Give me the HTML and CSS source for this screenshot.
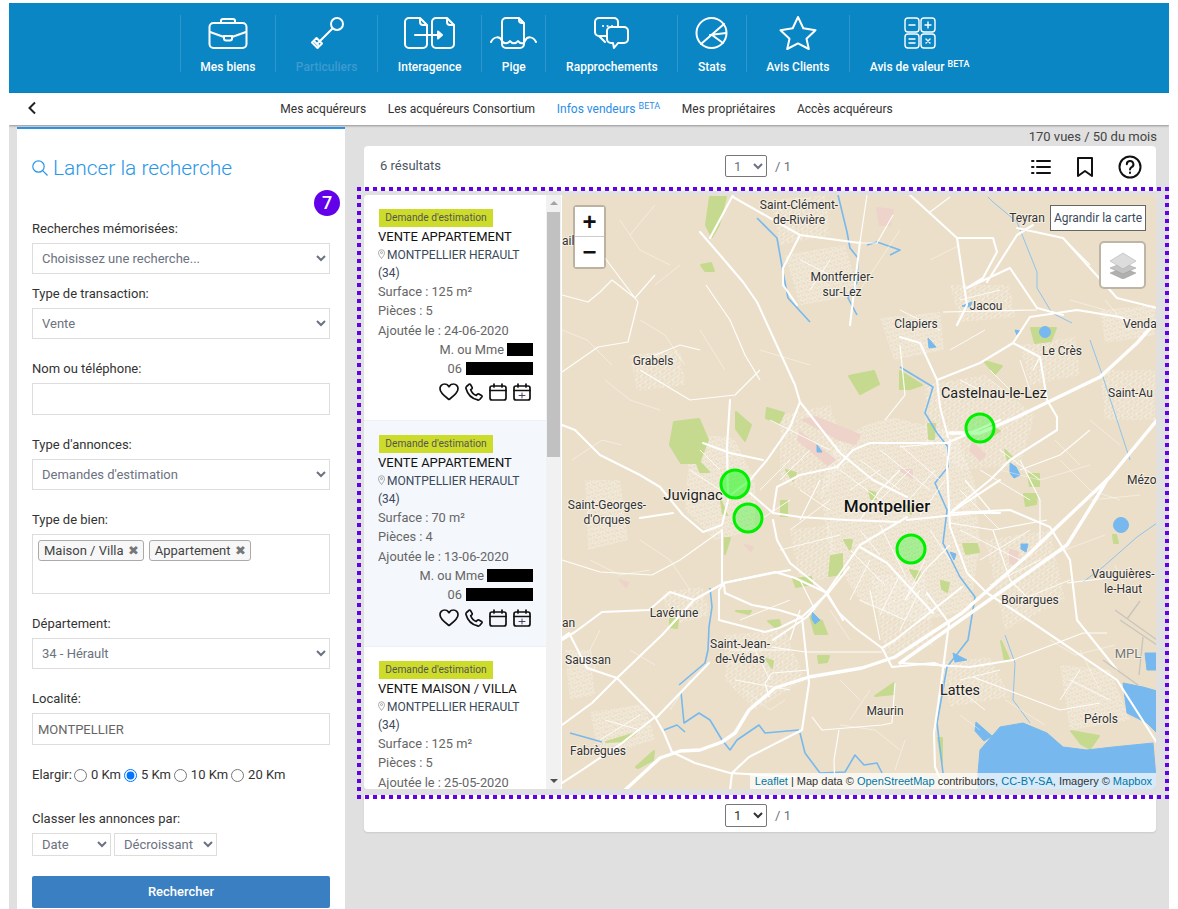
FILE: index.html
```html
<!DOCTYPE html>
<html lang="fr">
<head>
<meta charset="utf-8">
<title>Infos vendeurs</title>
<link rel="stylesheet" href="styles.css">
</head>
<body>
<div class="page">
  <header class="topbar">
    <a class="tab">
      <svg class="tab-icon" width="48" height="36" viewBox="0 0 48 36"><rect x="5.500" y="8" width="37" height="25" rx="4"/><path d="M17 8V6a2 2 0 0 1 2-2h10a2 2 0 0 1 2 2v2M6 17l14 5M42 17l-14 5M20 21h8v2.500a2 2 0 0 1-2 2h-4a2 2 0 0 1-2-2z"/></svg>
      <span class="tab-label">Mes biens</span>
    </a>
    <a class="tab tab-off">
      <svg class="tab-icon" width="48" height="36" viewBox="0 0 48 36"><circle cx="34" cy="9" r="6"/><path d="M29.500 13.500L15 28M9 27.500l4.500-4.500 5.500 5.500-4.500 4.500zM12 27l3 3"/></svg>
      <span class="tab-label">Particuliers</span>
    </a>
    <a class="tab">
      <svg class="tab-icon" width="56" height="36" viewBox="0 0 56 36"><path d="M18 3H7a4 4 0 0 0-4 4v22a4 4 0 0 0 4 4h14a4 4 0 0 0 4-4V10zM18 3v4a3 3 0 0 0 3 3h4M45 3H34a4 4 0 0 0-4 4v22a4 4 0 0 0 4 4h14a4 4 0 0 0 4-4V10zM45 3v4a3 3 0 0 0 3 3h4M13 20h26M36 16.500l4 3.500-4 3.500z"/></svg>
      <span class="tab-label">Interagence</span>
    </a>
    <a class="tab">
      <svg class="tab-icon" width="48" height="36" viewBox="0 0 48 36"><path d="M29 3H16a4 4 0 0 0-4 4v22a4 4 0 0 0 4 4h14a4 4 0 0 0 4-4V8zM29 3v2a3 3 0 0 0 3 3h2M1 27c3-6 9-6 11-1 2 3 6 3 8 0 2 3 6 3 8 0 2 3 6 3 7 0 2-5 8-5 11 1"/></svg>
      <span class="tab-label">Pige</span>
    </a>
    <a class="tab">
      <svg class="tab-icon" width="48" height="36" viewBox="0 0 48 36"><path d="M19 21h-8a4 4 0 0 1-4-4V7a4 4 0 0 1 4-4h15a4 4 0 0 1 4 4v5M11 21l6 6M23 12h13a4 4 0 0 1 4 4v8a4 4 0 0 1-4 4h-6l-4 5-1-5h-2a4 4 0 0 1-4-4v-8a4 4 0 0 1 4-4zM15 11h.1M19.500 11h.1M24 11h.1"/></svg>
      <span class="tab-label">Rapprochements</span>
    </a>
    <a class="tab">
      <svg class="tab-icon" width="48" height="36" viewBox="0 0 48 36"><circle cx="23.500" cy="18" r="15"/><path d="M13 29L36 9M22 20l16-2M24 20l11 8"/></svg>
      <span class="tab-label">Stats</span>
    </a>
    <a class="tab">
      <svg class="tab-icon" width="48" height="36" viewBox="0 0 48 36"><path d="M24 2l5.300 11.200 12.200 2-9 8.500 2.300 10.300-10.800-5.600L13.200 34l2.300-10.300-9-8.500 12.200-2z"/></svg>
      <span class="tab-label">Avis Clients</span>
    </a>
    <a class="tab tab-last">
      <svg class="tab-icon tab-icon-thin" width="48" height="36" viewBox="0 0 48 36"><rect x="9" y="3" width="14" height="14" rx="3"/><rect x="25" y="3" width="14" height="14" rx="3"/><rect x="9" y="19" width="14" height="14" rx="3"/><rect x="25" y="19" width="14" height="14" rx="3"/><path d="M13 10h6M29 10h6M32 7v6M13 24h6M13 28h6M30 24l4 4M34 24l-4 4"/></svg>
      <span class="tab-label">Avis de valeur <sup class="beta">BETA</sup></span>
    </a>
  </header>

  <nav class="subnav">
    <svg class="back" width="10" height="14" viewBox="0 0 10 14"><path d="M8 1.500L2.500 7 8 12.500"/></svg>
    <a>Mes acquéreurs</a>
    <a>Les acquéreurs Consortium</a>
    <a class="current">Infos vendeurs <sup class="beta">BETA</sup></a>
    <a>Mes propriétaires</a>
    <a>Accès acquéreurs</a>
  </nav>

  <div class="content">
    <aside class="sidebar">
      <h2 class="side-title">
        <svg width="16" height="18" viewBox="0 0 16 18"><circle cx="6.500" cy="7.500" r="5.700"/><path d="M10.700 11.700L15.500 16.500"/></svg>
        Lancer la recherche
      </h2>
      <span class="step-badge">7</span>
      <form class="search">
        <div class="field field-tight">
          <label>Recherches mémorisées:</label>
          <select class="control"><option>Choisissez une recherche...</option></select>
        </div>
        <div class="field">
          <label>Type de transaction:</label>
          <select class="control"><option>Vente</option></select>
        </div>
        <div class="field">
          <label>Nom ou téléphone:</label>
          <input class="control control-input" type="text">
        </div>
        <div class="field">
          <label>Type d'annonces:</label>
          <select class="control"><option>Demandes d'estimation</option></select>
        </div>
        <div class="field">
          <label>Type de bien:</label>
          <div class="tags">
            <span class="tag">Maison / Villa <b>✖</b></span>
            <span class="tag">Appartement <b>✖</b></span>
          </div>
        </div>
        <div class="field">
          <label>Département:</label>
          <select class="control"><option>34 - Hérault</option></select>
        </div>
        <div class="field">
          <label>Localité:</label>
          <input class="control control-input" type="text" value="MONTPELLIER">
        </div>
        <div class="radios">
          <span>Elargir:</span>
          <label><input type="radio" name="km"> 0 Km</label>
          <label><input type="radio" name="km" checked> 5 Km</label>
          <label><input type="radio" name="km"> 10 Km</label>
          <label><input type="radio" name="km"> 20 Km</label>
        </div>
        <div class="sort">
          <label>Classer les annonces par:</label>
          <div class="sort-row">
            <select class="sort-a"><option>Date</option></select>
            <select class="sort-b"><option>Décroissant</option></select>
          </div>
        </div>
        <button type="button" class="submit">Rechercher</button>
      </form>
    </aside>

    <main class="results">
      <div class="views">170 vues / 50 du mois</div>
      <div class="card head-card">
        <span class="count">6 résultats</span>
        <div class="pager"><select><option>1</option></select><span>/ 1</span></div>
        <div class="tools">
          <svg width="20" height="22" viewBox="0 0 20 22"><path d="M6 5h13M6 11h13M6 17h13M1 5h1.500M1 11h1.500M1 17h1.500"/></svg>
          <svg width="18" height="22" viewBox="0 0 18 22"><path d="M2 2h14v18l-7-5-7 5z"/></svg>
          <svg width="24" height="24" viewBox="0 0 24 24"><circle cx="12" cy="12" r="10.500"/><path d="M8.800 9.200a3.300 3.300 0 1 1 4.800 3c-1.100.7-1.600 1.200-1.600 2.300M12 17.500v.6"/></svg>
        </div>
      </div>

      <div class="card body-card">
        <div class="list">
          <article class="item">
            <span class="badge">Demande d'estimation</span>
            <h3>VENTE APPARTEMENT</h3>
            <p class="loc"><svg width="7" height="10" viewBox="0 0 7 10"><path d="M3.500 9.500C2 7.500.5 5.800.5 3.700a3 3 0 0 1 6 0c0 2.100-1.500 3.800-3 5.800z"/><circle cx="3.500" cy="3.600" r="1"/></svg> MONTPELLIER HERAULT (34)</p>
            <p class="meta">Surface : 125 m²</p>
            <p class="meta">Pièces : 5</p>
            <p class="meta">Ajoutée le : 24-06-2020</p>
            <p class="meta right">M. ou Mme <i class="redact redact-s"></i></p>
            <p class="meta right">06 <i class="redact redact-l"></i></p>
            <div class="actions">
              <svg width="20" height="18" viewBox="0 0 20 18"><path d="M10 16.500C6 13.500 1 10.200 1 5.800A4.600 4.600 0 0 1 5.700 1c1.900 0 3.300 1 4.300 2.700C11 2 12.400 1 14.300 1A4.600 4.600 0 0 1 19 5.800c0 4.400-5 7.700-9 10.700z"/></svg>
              <svg width="18" height="18" viewBox="0 0 18 18"><path d="M1.500 3.500L4 1.300c.6-.4 1.200-.3 1.600.3l1.500 2.700c.3.600.2 1-.3 1.500L5.700 6.700c.8 2.200 3.200 4.900 5.600 5.700l1-1.100c.5-.5 1-.6 1.600-.3l2.600 1.500c.6.400.7 1 .3 1.500l-2.100 2.500c-.5.500-1.200.7-2 .4C6.500 15.500 2.600 11.500 1 5.500c-.2-.8 0-1.500.5-2z"/></svg>
              <svg width="18" height="18" viewBox="0 0 18 18"><rect x="1" y="3" width="16" height="14" rx="2"/><path d="M1 7.500h16M5 1v3M13 1v3"/></svg>
              <svg width="18" height="18" viewBox="0 0 18 18"><rect x="1" y="3" width="16" height="14" rx="2"/><path d="M1 7.500h16M5 1v3M13 1v3"/><path class="thin" d="M6 12.500h6M9 10v5"/></svg>
            </div>
          </article>
          <article class="item item-alt">
            <span class="badge">Demande d'estimation</span>
            <h3>VENTE APPARTEMENT</h3>
            <p class="loc"><svg width="7" height="10" viewBox="0 0 7 10"><path d="M3.500 9.500C2 7.500.5 5.800.5 3.700a3 3 0 0 1 6 0c0 2.100-1.500 3.800-3 5.800z"/><circle cx="3.500" cy="3.600" r="1"/></svg> MONTPELLIER HERAULT (34)</p>
            <p class="meta">Surface : 70 m²</p>
            <p class="meta">Pièces : 4</p>
            <p class="meta">Ajoutée le : 13-06-2020</p>
            <p class="meta right">M. ou Mme <i class="redact redact-m"></i></p>
            <p class="meta right">06 <i class="redact redact-l"></i></p>
            <div class="actions">
              <svg width="20" height="18" viewBox="0 0 20 18"><path d="M10 16.500C6 13.500 1 10.200 1 5.800A4.600 4.600 0 0 1 5.700 1c1.900 0 3.300 1 4.300 2.700C11 2 12.400 1 14.300 1A4.600 4.600 0 0 1 19 5.800c0 4.400-5 7.700-9 10.700z"/></svg>
              <svg width="18" height="18" viewBox="0 0 18 18"><path d="M1.500 3.500L4 1.300c.6-.4 1.200-.3 1.600.3l1.500 2.700c.3.600.2 1-.3 1.500L5.700 6.700c.8 2.200 3.200 4.900 5.600 5.700l1-1.100c.5-.5 1-.6 1.600-.3l2.600 1.500c.6.400.7 1 .3 1.500l-2.100 2.500c-.5.500-1.200.7-2 .4C6.500 15.500 2.600 11.500 1 5.500c-.2-.8 0-1.500.5-2z"/></svg>
              <svg width="18" height="18" viewBox="0 0 18 18"><rect x="1" y="3" width="16" height="14" rx="2"/><path d="M1 7.500h16M5 1v3M13 1v3"/></svg>
              <svg width="18" height="18" viewBox="0 0 18 18"><rect x="1" y="3" width="16" height="14" rx="2"/><path d="M1 7.500h16M5 1v3M13 1v3"/><path class="thin" d="M6 12.500h6M9 10v5"/></svg>
            </div>
          </article>
          <article class="item">
            <span class="badge">Demande d'estimation</span>
            <h3>VENTE MAISON / VILLA</h3>
            <p class="loc"><svg width="7" height="10" viewBox="0 0 7 10"><path d="M3.500 9.500C2 7.500.5 5.800.5 3.700a3 3 0 0 1 6 0c0 2.100-1.500 3.800-3 5.800z"/><circle cx="3.500" cy="3.600" r="1"/></svg> MONTPELLIER HERAULT (34)</p>
            <p class="meta">Surface : 125 m²</p>
            <p class="meta">Pièces : 5</p>
            <p class="meta">Ajoutée le : 25-05-2020</p>
          </article>
        </div>
        <div class="scrollbar">
          <span class="arrow-up"></span>
          <span class="thumb"></span>
          <span class="arrow-down"></span>
        </div>
        <div class="map">
          <svg class="map-svg" width="594" height="594" viewBox="562 195 594 594">
            <defs>
              <pattern id="streets" width="7" height="6" patternUnits="userSpaceOnUse" patternTransform="rotate(28)">
                <path class="street-grid" d="M0 0h7M0 3h4M0 0v6M4 0v3M5.500 3v3"/>
              </pattern>
              <pattern id="streets2" width="6" height="7" patternUnits="userSpaceOnUse" patternTransform="rotate(-35)">
                <path class="street-grid" d="M0 0h6M2 3.500h4M0 0v4M3 3.500v3.500"/>
              </pattern>
            </defs>
            <g class="map-art">
            <rect class="land" x="562" y="195" width="594" height="594"/>
            <g class="urban">
              <path d="M835 445q30-25 60-27l60 14 20 50 5 60-10 70-60 10-50-20-30-50-10-60z"/>
              <path d="M690 440q30-8 45 0l20 40 0 50-40 10-30-30z"/>
              <path d="M1060 665l50 5 20 50-60 10z"/>
              <path d="M880 318l60-6 4 38-50 10z"/>
              <path d="M785 255l60-10 15 50-60 10z"/>
              <path d="M585 480l35 0 8 60-40 10z"/>
              <path d="M565 650l25 0 5 45-25 5z"/>
              <path d="M1100 310l55-5 0 30-50 8z"/>
              <path d="M590 712l55-8 10 35-55 20z"/>
            </g>
            <g class="urban-b">
              <path d="M780 415l50-10 20 55-30 40-40-20z"/>
              <path d="M925 385l60-10 50 40-15 50-60 5-35-30z"/>
              <path d="M940 662l50-5 20 40-60 10z"/>
              <path d="M725 635l60-5 20 50-50 30-30-30z"/>
              <path d="M662 592l40-5 8 28-40 10z"/>
              <path d="M950 285l60 0 5 32-55 5z"/>
              <path d="M770 200l55-5 5 40-50 10z"/>
              <path d="M1020 345l55-8 5 38-50 10z"/>
              <path d="M630 355l50-5 5 35-48 6z"/>
              <path d="M1100 370l55 0 0 50-50 0z"/>
              <path d="M870 575l55 0 10 70-50 10z"/>
              <path d="M985 540l65-10 15 70-60 30z"/>
              <path d="M790 530l40-5 10 50-40 10z"/>
            </g>
            <g class="green">
              <path d="M710 197h16l-7 28-7 12-6-12z"/>
              <path d="M701 265l10-2 3 8-9 0z"/>
              <path d="M674 422l25-3 9 21-9 23-18 0-11-18z"/>
              <path d="M736 412l15 13-6 16-9-12z"/>
              <path d="M767 408l17 5-5 10-13-5z"/>
              <path d="M694 456l15 16-9 0z"/>
              <path d="M721 501l6 14-4-1z"/>
              <path d="M781 501h6v15h-6z"/>
              <path d="M831 556l11-2v20l-13 2z"/>
              <path d="M793 579l18-2 1 7-16 3z"/>
              <path d="M725 538h5l-5 16z"/>
              <path d="M869 491l6 2 1 6-5 0z"/>
              <path d="M928 424h7l-1 15h-5z"/>
              <path d="M941 581l8 2-2 9-5-3z"/>
              <path d="M963 544l14 0 2 8-13 2z"/>
              <path d="M849 376l25-5 5 13-19 10z"/>
              <path d="M1031 328l25 0-5 13-16 2z"/>
              <path d="M984 361l18 5-7 8z"/>
              <path d="M900 371l22 14-12 4-10 0z"/>
              <path d="M1028 474h11v12h-9z"/>
              <path d="M1024 494h13l-1 10-10 2z"/>
              <path d="M1001 641l8 18-4 2z"/>
              <path d="M1071 731l28 5-9 13-9-5z"/>
              <path d="M875 696l19-13 0 11z"/>
              <path d="M938 738h4v24z"/>
              <path d="M636 767l18-16-1 9-15 8z"/>
              <path d="M606 742l30-9-11 8z"/>
              <path d="M670 619h8l-1 9-7-1z"/>
              <path d="M768 621l11-1 2 7-6 0z"/>
              <path d="M736 611l15 0-2 3z"/>
              <path d="M810 616l12 5 5 13-12 0z"/>
              <path d="M818 656l11 0-2 6-8 1z"/>
              <path d="M766 659l7 2-1 7z"/>
              <path d="M990 425l10 6-6 4z"/>
              <path d="M1113 535l3 0 2 8-4 0z"/>
              <path d="M905 505l8 3-2 6z"/>
              <path d="M910 570l10 2-4 8z"/>
              <path d="M1005 450l8 8-5 3z"/>
              <path d="M844 540l8 0-2 10z"/>
              <path d="M786 470l10 3-3 8z"/>
            </g>
            <g class="pink">
              <path d="M803 420l12-3 45 18-5 9-15-4z"/>
              <path d="M800 432l35 28-7 5-30-25z"/>
              <path d="M877 208l16 2-3 15-10 0z"/>
              <path d="M973 443l12 12-5 5-10-10z"/>
              <path d="M745 545l8 2-2 4z"/>
              <path d="M620 580l8 3-2 4z"/>
              <path d="M900 470l12 0 0 8z"/>
              <path d="M1010 550l8 2-2 15-6-5z"/>
            </g>
            <g class="water">
              <path d="M978 789l0-16 2-23 20-23 23-4 24 10 16 14 24 3 26-3 40-4 4 46z"/>
              <path d="M1123 683l20 4 14 4v42l-10-10-20-10z"/>
              <path d="M1145 653l12 0v17l-10 0z"/>
              <circle cx="1045" cy="332" r="5.500"/>
              <circle cx="1121" cy="525" r="7.500"/>
              <path d="M1010 463l6 4 4 8-6 3-4-5z"/>
              <path d="M1021 544l7 0-2 8-5-3z"/>
              <path d="M953 653l14 7-12 2z"/>
              <path d="M928 338l8 9-7 1z"/>
              <path d="M1015 330l5 1-3 4z"/>
              <path d="M962 306l10-4-2 5z"/>
              <path d="M976 722l16 14-8 5-9-10z"/>
              <path d="M812 612l8 8-5 4-3-5z"/>
              <path d="M817 445l5 7-5 0z"/>
              <path d="M950 552l6 2-2 6z"/>
            </g>
            <g class="river">
              <path d="M838 195l9 37 3 16 8 10-1 24-9 16 9 17M900 367l33 20-8 26 12 20 11 14v20l-13 16 12 27-4 33 17 34 15 20-7 43-21 27-10 56 6 50"/>
              <path d="M710 588l2 19-3 20-1 23-3 13-26 22M681 692l3 31 15-10 11 7 12 20 8 10 7-10 22-15 6 8 34-3M664 730l13-5 8 7M800 733l5 20 15 20 25-1 10-17 9 10 13-2 5 10"/>
              <path d="M570 733l32 9M757 218l20 20 6 34 5 26 22 24M867 245l10-3 23 8-10 5"/>
            </g>
            <g class="river-thin">
              <path d="M988 197l5 5 24 20 20 50v16l15 25 20 10M1090 340l13 37 27 83M1157 523l-20 14-34 30-20 15M1005 635l10 28-2 37 17 23"/>
            </g>
            <g class="road-tiny">
              <path d="M562 330l25 10 25 25M605 380l25 20 30 10M572 460l30-20 20 5M640 320l25 15 20 30M680 265l-25 20M620 220l20 30 30 15M655 205l-25 30M590 560l30 15 30-5M640 540l30 20 20 30M600 630l-10 20 5 20M630 650l25 15M690 680l-20 30M745 690l25 20 15-10M840 725l35 5 25 20M870 690l-20 30M1000 470l40 10 50-15M1060 460l30 30 30 10M1040 560l25-10 40-15M1130 600l-15-35M1050 640l25 15 40-10M1005 700l40 25M1105 300l25 30M905 740l-10 30M1090 420l30 25M960 715l20 15M1055 440l25 25M700 330l25 40M760 350l50 15M1070 300l35 10M900 230l-20 30-20 30M930 260l30-15M1010 395l-20-15M830 610l20 30M860 700l-20-20M1100 690l-20-40M1130 580l25-5M1090 500l50-5"/>
            </g>
            <g class="road-street">
              <path d="M840 470L880 500M860 460L900 490M880 450L930 490M900 445L940 480M850 490L880 470M870 510L910 470M900 510L935 470M920 515L945 480M860 530L880 555M880 525L905 575M850 550L885 585M870 560L850 600M900 575L880 615M925 560L905 600M930 530L950 560M860 600L905 620M920 590L900 630M960 490L1000 530M980 470L1030 500M1000 450L1040 480M960 530L1020 560M980 560L1030 530M990 585L1040 560M1020 600L1070 580M700 450L720 470M690 470L720 490M760 520L790 500M790 530L830 500M780 550L840 535M800 490L830 510M810 450L780 480M760 490L790 460M770 420L830 450M740 620L790 600M750 640L770 680M730 650L790 650M735 680L790 690M960 380L1000 400M990 370L1020 400M1020 360L1030 390M950 350L985 330M900 310L940 330M960 300L1000 290M800 260L840 280M810 290L830 260M960 680L1000 670M960 690L985 710M1070 680L1110 700M1080 670L1060 700M605 720L640 730M600 740L640 715"/>
            </g>
            <g class="road-minor">
              <path d="M562 295L588 302 600 292 612 280 635 298 655 275M605 258L638 302 628 342 598 347 562 372M640 370L690 400 735 395 760 370M706 285L730 320 745 355 760 380M562 560L600 572 652 575 680 560 722 530"/>
              <path d="M1013 660L1083 633 1107 633M1067 583L1117 577M973 677L1060 710 1100 703M900 447L940 443M950 523L993 530 1047 520M993 530L1010 580 1030 600M812 717L822 730 882 725 892 723M895 683L892 723M839 730L834 760 835 790M643 360L680 345 700 350M772 647L805 652 882 652M772 673L765 683 769 697M809 670L772 673"/>
              <path d="M860 242L867 195M860 243L877 243 893 215M930 212L950 197M943 312L1037 310M1063 238L1090 265M1033 370L1040 357M1090 430L1060 455 1020 470M1040 545L1040 500 1020 460M885 420L905 395 900 345M965 480L990 510M860 520L880 490 900 470M800 520L820 480M905 600L925 570 950 545M870 590L880 640M800 580L815 610M790 640L800 610"/>
            </g>
            <g class="road-mid">
              <path d="M724 583L694 600 662 635 617 678 587 668 569 633 562 638M562 640L575 632 602 612 649 610 670 592 694 600M617 678L655 717 664 733 672 752 695 763 730 773 795 777M657 717L709 663M655 717L622 743 582 770 562 783M562 725L592 703 617 678"/>
              <path d="M730 790L732 773 749 757 802 730 809 683 802 617 829 592 849 567M802 617L779 628 765 632 719 620 719 590 724 583M724 585L725 593 752 605 779 610 802 617M724 583L775 572 795 578 825 592 839 613 855 628 882 648 892 667 934 663 945 667M927 593L949 623 942 677 934 733 935 767 944 787M962 587L895 640 882 648"/>
              <path d="M640 475L660 487 683 515 703 532 722 525 728 500M640 518L673 513M640 475L630 470 600 455 575 430 562 425M722 530L722 583M728 497L750 480 767 460 790 427 800 402 795 385 757 302 743 282 720 255 700 232M733 195L710 238M750 493L773 513 800 517 847 520 900 522M703 443L730 453 763 460M730 400L727 447 728 497M773 513L777 487 800 475 837 467 853 450 870 443 927 443 947 443 1000 420M800 402L840 453 873 480 907 497M773 520L777 540 790 563 827 593 807 617 773 640M827 592L860 545 880 533 907 517M860 547L887 563 933 613M827 593L843 620M950 513L1000 480M907 520L973 513 1000 513M723 583L773 573 790 570"/>
              <path d="M900 337L920 343 937 380 940 407 948 437M1013 343L1030 317 1077 310 1120 317 1133 323M937 380L980 363 1013 343 1040 357 1047 400 1057 417 1057 430 1010 460 990 480 953 510M950 440L947 467 950 527 967 573 987 593 1033 623 1117 680 1157 743M950 513L1010 510 1050 527 1070 560 1077 620 1117 670M900 663L970 667 1013 660"/>
              <path d="M733 197L777 222 800 235 783 268 783 285 797 305M860 242L850 325M910 195L957 238 967 305 957 325M957 238L993 238 997 252 983 278 967 288M987 282L1017 235 1033 225M1017 228L1063 238 1117 298 1157 308M967 288L1010 268 1037 308 1063 315M800 235L860 243"/>
            </g>
            <g class="road-major">
              <path d="M625 790L660 758 680 751 700 750 722 742 735 733 749 710 775 688 809 677 862 668 895 657 962 613 1030 553 1057 527 1110 477 1157 420"/>
              <path d="M900 663L1067 545 1097 497 1107 480"/>
              <path d="M950 433L980 433 1017 417 1100 377 1137 343 1160 317"/>
            </g>
            <g class="airport">
              <path d="M1115 610l42 30M1120 620l37 25M1103 660l35 25M1140 601l-13 18M1143 637l-4 38"/>
            </g>
            </g>
            <g class="pins">
              <circle class="pin-strong" cx="735" cy="484" r="14"/>
              <circle cx="748" cy="518" r="14"/>
              <circle cx="911" cy="549" r="14"/>
              <circle cx="980" cy="428" r="14"/>
            </g>
            <g class="labels">
              <text x="799" y="209" text-anchor="middle">Saint-Clément-</text>
              <text x="799" y="224" text-anchor="middle">de-Rivière</text>
              <text x="1027" y="222" text-anchor="middle">Teyran</text>
              <text x="842" y="281" text-anchor="middle">Montferrier-</text>
              <text x="842" y="296" text-anchor="middle">sur-Lez</text>
              <text x="986" y="310" text-anchor="middle">Jacou</text>
              <text x="916" y="328" text-anchor="middle">Clapiers</text>
              <text x="1123" y="328">Venda</text>
              <text x="1062" y="355" text-anchor="middle">Le Crès</text>
              <text x="653" y="365" text-anchor="middle">Grabels</text>
              <text class="label-l" x="941" y="398">Castelnau-le-Lez</text>
              <text x="1108" y="397">Saint-Au</text>
              <text x="1127" y="484">Mézo</text>
              <text class="label-j" x="693" y="500" text-anchor="middle">Juvignac</text>
              <text x="607" y="509" text-anchor="middle">Saint-Georges-</text>
              <text x="607" y="524" text-anchor="middle">d'Orques</text>
              <text class="label-xl" x="887" y="512" text-anchor="middle">Montpellier</text>
              <text x="674" y="617" text-anchor="middle">Lavérune</text>
              <text x="740" y="648" text-anchor="middle">Saint-Jean-</text>
              <text x="740" y="663" text-anchor="middle">de-Védas</text>
              <text x="588" y="664" text-anchor="middle">Saussan</text>
              <text x="1123" y="578" text-anchor="middle">Vauguières-</text>
              <text x="1123" y="593" text-anchor="middle">le-Haut</text>
              <text x="1030" y="604" text-anchor="middle">Boirargues</text>
              <text class="label-gray" x="1128" y="658" text-anchor="middle">MPL</text>
              <text class="label-l" x="960" y="695" text-anchor="middle">Lattes</text>
              <text x="885" y="715" text-anchor="middle">Maurin</text>
              <text x="1101" y="723" text-anchor="middle">Pérols</text>
              <text x="598" y="755" text-anchor="middle">Fabrègues</text>
              <text x="562" y="245">ail</text>
              <text x="562" y="627">an</text>
            </g>
          </svg>
          <div class="zoom">
            <button type="button">+</button>
            <button type="button">−</button>
          </div>
          <button type="button" class="enlarge">Agrandir la carte</button>
          <div class="layers">
            <svg width="28" height="28" viewBox="0 0 28 28"><path class="layer-c" d="M14 17l13 5-13 6L1 22z"/><path class="layer-b" d="M14 12l13 5-13 6L1 17z"/><path class="layer-a" d="M14 2l13 8-13 8L1 10z"/></svg>
          </div>
          <div class="attribution"><a>Leaflet</a> | Map data © <a>OpenStreetMap</a> contributors, <a>CC-BY-SA</a>, Imagery © <a>Mapbox</a></div>
        </div>
      </div>

      <div class="card foot-card">
        <div class="pager pager-foot"><select><option>1</option></select><span>/ 1</span></div>
      </div>
      <div class="selection"></div>
    </main>
  </div>
</div>
</body>
</html>
```

FILE: styles.css
```css
* { box-sizing: border-box; }
html, body { margin: 0; height: 909px; overflow: hidden; background: #fff; }
body { font-family: Roboto, "Liberation Sans", sans-serif; font-size: 13px; color: #333; }
a { text-decoration: none; }

.page { margin: 3px 9px 0; height: 906px; background: #e0e0e0; display: flex; flex-direction: column; overflow: hidden; }

/* top bar */
.topbar { height: 90px; flex: none; background: #0b86c4; display: flex; justify-content: center; align-items: center; padding-bottom: 9px; }
.tab { height: 57px; padding: 0 19.7px; border-left: 1px solid #2f97cd; color: #fff; font-size: 12px; font-weight: 500; display: flex; flex-direction: column; align-items: center; justify-content: space-between; white-space: nowrap; }
.tab-off .tab-label { color: #3c9bd0; }
.tab-last { padding-right: 29px; }
.tab-icon { display: block; fill: none; stroke: #fff; stroke-width: 2; stroke-linejoin: round; stroke-linecap: round; margin: 0 -20px; }
.tab-icon-thin { stroke-width: 1.4; }
.tab-label { height: 12px; line-height: 14px; display: block; }
.beta { font-size: 9px; line-height: 0; vertical-align: 4px; }

/* sub navigation */
.subnav { height: 32px; flex: none; background: #fff; position: relative; display: flex; justify-content: center; align-items: center; gap: 21.6px; font-size: 12px; box-shadow: 0 1px 2px rgba(0,0,0,.35); padding-right: 5px; z-index: 1; }
.subnav a { color: #333; }
.subnav .current { color: #2a8ee6; }
.back { position: absolute; left: 18px; top: 8px; fill: none; stroke: #222; stroke-width: 2; }

/* layout */
.content { flex: 1; display: flex; gap: 19px; padding: 2px 0 0 8px; min-height: 0; }

/* sidebar */
.sidebar { width: 328px; flex: none; background: #fff; border-top: 2px solid #2a96e8; padding: 0 15px; position: relative; }
.side-title { margin: 25px 0 36px; font-size: 20.9px; font-weight: 300; line-height: 28px; color: #2a96e8; display: flex; align-items: center; gap: 5px; }
.side-title svg { fill: none; stroke: #2a96e8; stroke-width: 1.2; }
.step-badge { position: absolute; left: 297px; top: 61px; width: 26px; height: 26px; border-radius: 50%; background: #6200ea; color: #fff; font-size: 18px; font-weight: 500; line-height: 26px; text-align: center; }
.search { display: flex; flex-direction: column; }
.field { margin-bottom: 19px; }
.field-tight { margin-bottom: 9px; }
.field label, .sort label { display: block; height: 20px; line-height: 22px; margin-bottom: 5px; color: #333; }
.control { display: block; width: 100%; height: 31px; border: 1px solid #ddd; border-radius: 0; background: #fff; color: #6b7280; font: 13px Roboto, sans-serif; padding: 0 5px; }
.control-input { height: 32px; color: #666; padding: 0 5px; outline: none; }
.tags { height: 60px; border: 1px solid #ddd; padding: 5px; display: flex; align-items: flex-start; gap: 5px; }
.tag { height: 21px; line-height: 19px; padding: 0 4px 0 5px; border: 1px solid #aaa; border-radius: 3px; background: #f7f7f7; color: #444; white-space: nowrap; }
.tag b { color: #777; font-size: 13px; font-weight: 400; margin-left: 1px; }
.radios { height: 20px; margin-top: 1px; display: flex; align-items: center; margin-bottom: 23px; line-height: 20px; }
.radios label { display: flex; align-items: center; gap: 4px; margin-left: 3px; }
.radios span { margin-right: -1px; }
.radios input { margin: 0; width: 13px; height: 13px; }
.sort { margin-bottom: 20px; }
.sort-row { display: flex; gap: 3px; }
.sort select { height: 23px; border: 1px solid #ddd; background: #fff; color: #6b7280; font: 13px Roboto, sans-serif; padding: 0 5px; }
.sort-a { width: 79px; }
.sort-b { width: 103px; }
.submit { width: 100%; height: 32px; border: 0; border-radius: 2px; background: #3a7fc1; color: #fff; font: 500 13px Roboto, sans-serif; padding: 0 0 2px; }

/* results */
.results { width: 792px; flex: none; position: relative; display: flex; flex-direction: column; }
.views { height: 19px; line-height: 20px; text-align: right; color: #444; font-size: 13px; margin-right: -1px; }
.card { background: #fff; border-radius: 4px; }
.head-card { height: 45px; margin-bottom: 4px; display: grid; grid-template-columns: 1fr auto 1fr; align-items: start; padding: 9px 14px 0 16px; border-radius: 4px 4px 0 0; }
.count { line-height: 22px; color: #4b5563; font-size: 13px; }
.pager { display: flex; align-items: center; gap: 8px; color: #6b7280; font-size: 13px; margin-right: 6px; }
.pager select { width: 42px; height: 22px; border: 1px solid #777; border-radius: 2px; background: #fff; color: #6b7280; font: 13px Roboto, sans-serif; padding: 0 4px; }
.tools { display: flex; justify-content: flex-end; align-items: center; gap: 24px; }
.tools svg { fill: none; stroke: #111; stroke-width: 2; stroke-linecap: round; stroke-linejoin: round; display: block; }
.tools svg:first-child { margin-right: 1px; }
.body-card { height: 594px; display: flex; overflow: hidden; position: relative; }
.list { width: 182px; flex: none; overflow: hidden; }
.item { height: 226px; padding: 14px 13px 0 14px; border-bottom: 1px solid #edf0f5; }
.item-alt { background: #f4f7fc; }
.badge { display: block; width: 114px; height: 18px; margin-left: 1px; background: #cddc2b; color: #555; font-size: 10.2px; line-height: 18px; text-align: center; white-space: nowrap; }
.item h3 { margin: 1px 0 0; height: 18px; line-height: 18px; font-size: 13px; font-weight: 400; color: #111; white-space: nowrap; }
.loc { margin: 0; line-height: 18px; font-size: 12px; color: #3b4a5a; }
.loc svg { fill: none; stroke: #888; stroke-width: .7; margin-right: -1px; }
.meta { margin: 0; height: 19.25px; line-height: 19.25px; font-size: 12.8px; color: #666; white-space: nowrap; }
.right { display: flex; justify-content: flex-end; align-items: center; gap: 3px; }
.redact { display: block; height: 13px; background: #000; }
.redact-s { width: 26px; }
.redact-m { width: 46px; }
.redact-l { width: 67px; margin-left: 1px; }
.actions { margin-top: 5px; margin-right: 2px; display: flex; justify-content: flex-end; gap: 6px; }
.actions svg { fill: none; stroke: #111; stroke-width: 1.7; stroke-linejoin: round; stroke-linecap: round; display: block; }
.actions svg .thin { stroke-width: .9; stroke: #335; }
.scrollbar { width: 15px; flex: none; background: #f1f1f1; position: relative; margin-right: 1px; }
.thumb { position: absolute; left: 1px; right: 1px; top: 17px; height: 245px; background: #c1c1c1; }
.arrow-up, .arrow-down { position: absolute; left: 4px; width: 0; height: 0; border-left: 4px solid transparent; border-right: 4px solid transparent; }
.arrow-up { top: 6px; border-bottom: 4px solid #a3a3a3; }
.arrow-down { bottom: 6px; border-top: 4px solid #505050; }

/* map */
.map { width: 594px; flex: none; height: 594px; position: relative; overflow: hidden; background: #ebdfc9; }
.map-svg { display: block; }
.map-art { filter: blur(.3px); }
.land { fill: #ebdfc9; }
.urban path { fill: url(#streets); }
.urban-b path { fill: url(#streets2); }
.street-grid { fill: none; stroke: #fff; stroke-width: .6; opacity: .75; }
.green path { fill: #c5da8f; stroke: #c5da8f; stroke-width: 2; stroke-linejoin: round; }
.pink path { fill: #edd3c9; stroke: #edd3c9; stroke-width: 2; stroke-linejoin: round; }
.water path, .water circle { fill: #77b9ee; stroke: #77b9ee; stroke-width: 1; stroke-linejoin: round; }
.river path { fill: none; stroke: #77b9ee; stroke-width: 1.6; stroke-linejoin: round; }
.river-thin path { fill: none; stroke: #8dc3ee; stroke-width: 1; stroke-linejoin: round; }
.road-tiny path { fill: none; stroke: #fff; stroke-width: .7; opacity: .6; }
.road-street path { fill: none; stroke: #fff; stroke-width: 1; opacity: .85; }
.road-minor path { fill: none; stroke: #fff; stroke-width: 1.2; stroke-linejoin: round; opacity: .95; }
.road-mid path { fill: none; stroke: #fff; stroke-width: 2.1; stroke-linejoin: round; stroke-linecap: round; }
.road-major path { fill: none; stroke: #fff; stroke-width: 3.4; stroke-linejoin: round; stroke-linecap: round; }
.airport path { fill: none; stroke: #c9c5bd; stroke-width: 1.4; }
.pins circle { fill: #00ff00; fill-opacity: .3; stroke: #00ee00; stroke-width: 3; }
.pins .pin-strong { fill-opacity: .5; }
.labels text { font-family: Roboto, sans-serif; font-size: 12px; fill: #333; stroke: rgba(255,255,255,.45); stroke-width: 2; paint-order: stroke; }
.labels .label-l { font-size: 14.4px; fill: #222; }
.labels .label-j { font-size: 14.8px; fill: #222; }
.labels .label-xl { font-size: 17px; font-weight: 500; fill: #111; }
.labels .label-gray { fill: #777; font-size: 13px; }
.zoom { position: absolute; left: 11px; top: 10px; width: 33px; border: 2px solid rgba(0,0,0,.2); border-radius: 4px; background-clip: padding-box; display: flex; flex-direction: column; }
.zoom button { width: 29px; height: 30px; border: 0; background: #fff; color: #111; font: 700 24px/28px "Liberation Sans", sans-serif; padding: 0; }
.zoom button:first-child { border-bottom: 1px solid #ccc; }
.enlarge { position: absolute; left: 488px; top: 10px; width: 96px; height: 26px; border: 1px solid #666; background: #fff; color: #3b4a5a; font: 12px Roboto, sans-serif; padding: 0; white-space: nowrap; }
.layers { position: absolute; left: 537px; top: 46px; width: 47px; height: 48px; background: #fff; border: 2px solid #bdb6a8; border-radius: 5px; display: flex; align-items: center; justify-content: center; }
.layer-a { fill: #dcdcdc; stroke: #aaa; stroke-width: .5; }
.layer-b { fill: #c4c4c4; stroke: #999; stroke-width: .5; }
.layer-c { fill: #b0b0b0; stroke: #999; stroke-width: .5; }
.attribution { position: absolute; right: 0; bottom: 0; height: 16px; line-height: 16px; padding: 0 4px 0 5px; background: rgba(255,255,255,.7); font: 11px/16px "Liberation Sans", sans-serif; color: #333; white-space: nowrap; }
.attribution a { color: #0078a8; }

.foot-card { height: 37px; margin-top: 6px; padding-top: 9px; display: flex; justify-content: center; border-radius: 0 0 4px 4px; box-shadow: 0 1px 2px rgba(0,0,0,.1); }
.pager-foot { height: 23px; margin-right: 4px; }
.pager-foot select { height: 23px; color: #333; }

/* dotted selection frame */
.selection { position: absolute; left: -7px; top: 60px; width: 812px; height: 612px; pointer-events: none;
  background:
    repeating-linear-gradient(90deg, #6200ea 0 4px, transparent 4px 8px) left top / 100% 4px no-repeat,
    repeating-linear-gradient(90deg, #6200ea 0 4px, transparent 4px 8px) left bottom / 100% 4px no-repeat,
    repeating-linear-gradient(0deg, #6200ea 0 4px, transparent 4px 8px) left top / 4px 100% no-repeat,
    repeating-linear-gradient(0deg, #6200ea 0 4px, transparent 4px 8px) right top / 4px 100% no-repeat;
}
```
